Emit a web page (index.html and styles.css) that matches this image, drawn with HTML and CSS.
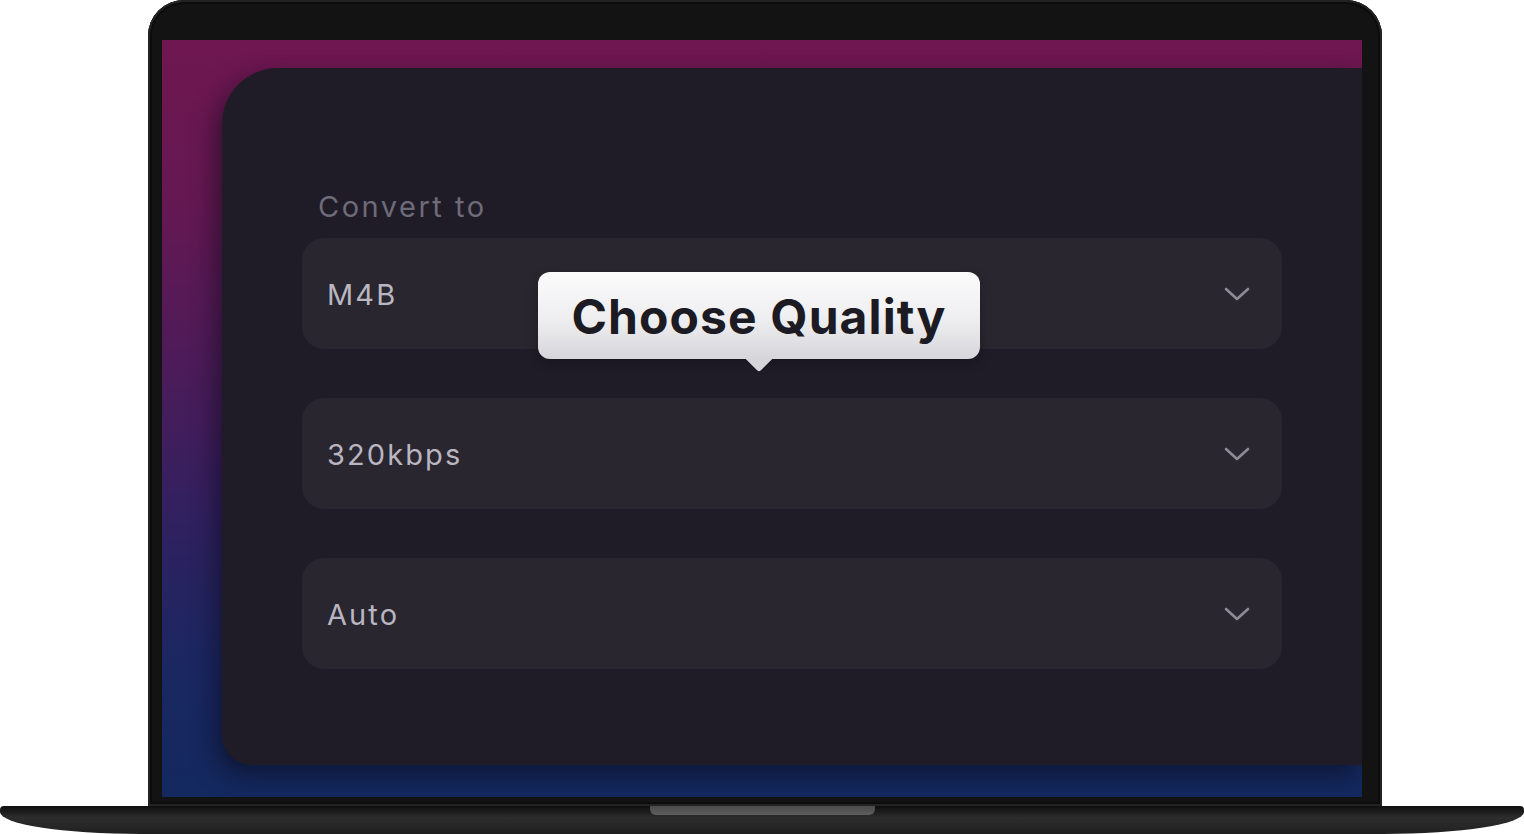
FILE: index.html
```html
<!DOCTYPE html>
<html lang="en">
<head>
<meta charset="utf-8">
<title>Choose Quality</title>
<link rel="stylesheet" href="styles.css">
</head>
<body>
<div class="laptop">
  <div class="lid">
    <div class="screen">
      <div class="panel">
        <div class="label">Convert to</div>
        <div class="fields">
          <div class="select">
            <span class="value">M4B</span>
            <svg class="chev" width="26" height="14" viewBox="0 0 26 14"><path d="M2 2 L13 12 L24 2" fill="none" stroke="#8d8a98" stroke-width="2.6" stroke-linecap="round" stroke-linejoin="round"/></svg>
            <div class="tooltip">
              <span>Choose Quality</span>
            </div>
          </div>
          <div class="select">
            <span class="value">320kbps</span>
            <svg class="chev" width="26" height="14" viewBox="0 0 26 14"><path d="M2 2 L13 12 L24 2" fill="none" stroke="#8d8a98" stroke-width="2.6" stroke-linecap="round" stroke-linejoin="round"/></svg>
          </div>
          <div class="select">
            <span class="value">Auto</span>
            <svg class="chev" width="26" height="14" viewBox="0 0 26 14"><path d="M2 2 L13 12 L24 2" fill="none" stroke="#8d8a98" stroke-width="2.6" stroke-linecap="round" stroke-linejoin="round"/></svg>
          </div>
        </div>
      </div>
    </div>
  </div>
  <div class="base"><div class="notch"></div></div>
</div>
</body>
</html>
```

FILE: styles.css
```css
html, body {
  margin: 0;
  padding: 0;
  background: #ffffff;
}
body {
  font-family: Inter, "Noto Sans", sans-serif;
  width: 1524px;
  height: 834px;
  overflow: hidden;
}
.laptop {
  display: flex;
  flex-direction: column;
  align-items: flex-start;
  width: 1524px;
}
.lid {
  margin-left: 148px;
  width: 1234px;
  height: 806px;
  box-sizing: border-box;
  background: #131313;
  border-radius: 36px 36px 0 0;
  box-shadow: inset 0 0 0 2px #232323, inset 0 0 0 4px #0c0c0c;
  padding: 40px 20px 9px 14px;
  display: flex;
}
.screen {
  flex: 1;
  display: flex;
  padding: 28px 0 32px 60px;
  background: linear-gradient(180deg, #6f1750 0%, #641852 22%, #4a1c5a 45%, #2e2160 65%, #1b2761 82%, #13295f 100%);
  overflow: hidden;
}
.panel {
  flex: 1;
  background: #1f1c28;
  border-radius: 56px 0 0 30px;
  box-shadow: -6px 10px 24px rgba(10, 8, 20, 0.55);
  padding: 121px 80px 0 80px;
  display: flex;
  flex-direction: column;
}
.label {
  font-size: 29px;
  line-height: 36px;
  color: #6e6b79;
  padding-left: 16px;
  letter-spacing: 2.5px;
  margin-bottom: 13px;
}
.fields {
  display: flex;
  flex-direction: column;
  gap: 49px;
}
.select {
  position: relative;
  height: 111px;
  border-radius: 22px;
  background: #29262f;
  display: flex;
  align-items: center;
  justify-content: space-between;
  padding: 0 32px 0 25px;
}
.value {
  font-size: 29px;
  color: #b9b6c2;
  letter-spacing: 2.1px;
  padding-top: 2px;
}
.chev {
  display: block;
}
.tooltip {
  position: absolute;
  left: 236px;
  top: 34px;
  width: 442px;
  height: 87px;
  border-radius: 12px;
  background: linear-gradient(180deg, #fbfbfc 0%, #eeeef0 55%, #d6d5da 100%);
  display: flex;
  align-items: center;
  justify-content: center;
  box-shadow: 0 4px 12px rgba(0, 0, 0, 0.25);
}
.tooltip::after {
  content: "";
  position: absolute;
  left: 210px;
  bottom: -9px;
  width: 22px;
  height: 22px;
  background: #d6d5da;
  transform: rotate(45deg);
  border-radius: 0 0 4px 0;
  clip-path: polygon(100% 0, 100% 100%, 0 100%);
}
.tooltip span {
  position: relative;
  z-index: 1;
  font-size: 48px;
  font-weight: 700;
  color: #1c1a22;
  letter-spacing: 1.1px;
  padding-top: 1px;
}
.base {
  position: relative;
  width: 1524px;
  height: 28px;
  background: linear-gradient(180deg, #0f0f0f 0%, #1d1d1d 22%, #2d2d2d 40%, #262626 75%, #1f1f1f 100%);
  border-radius: 4px 4px 0 0;
  border-bottom-left-radius: 140px 22px;
  border-bottom-right-radius: 140px 22px;
  display: flex;
  justify-content: center;
}
.notch {
  width: 225px;
  height: 9px;
  background: linear-gradient(180deg, #4a4a4a, #5e5e5e);
  border-radius: 0 0 6px 6px;
}
```
